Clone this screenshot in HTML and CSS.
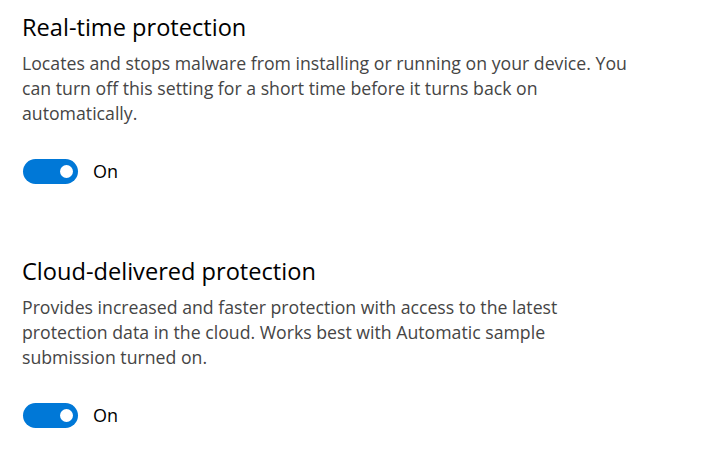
FILE: index.html
```html
<!DOCTYPE html>
<html lang="en">
<head>
<meta charset="utf-8">
<title>Virus &amp; threat protection settings</title>
<link rel="stylesheet" href="styles.css">
</head>
<body>
<main class="page">
  <section class="setting">
    <h2 class="setting-title">Real-time protection</h2>
    <p class="setting-desc">Locates and stops malware from installing or running on your device. You can turn off this setting for a short time before it turns back on automatically.</p>
    <div class="toggle-row">
      <span class="toggle"><span class="thumb"></span></span>
      <span class="toggle-label">On</span>
    </div>
  </section>
  <section class="setting">
    <h2 class="setting-title">Cloud-delivered protection</h2>
    <p class="setting-desc">Provides increased and faster protection with access to the latest protection data in the cloud. Works best with Automatic sample submission turned on.</p>
    <div class="toggle-row">
      <span class="toggle"><span class="thumb"></span></span>
      <span class="toggle-label">On</span>
    </div>
  </section>
</main>
</body>
</html>
```
FILE: styles.css
```css
html, body {
  margin: 0;
  padding: 0;
  background: #ffffff;
}
body {
  font-family: "Open Sans", "Noto Sans", sans-serif;
  width: 713px;
  height: 453px;
  overflow: hidden;
}
.page {
  padding: 10px 0 0 22px;
  width: 609px;
}
.setting {
  margin-bottom: 70px;
}
.setting:last-child {
  margin-bottom: 0;
}
.setting-title {
  margin: 0;
  font-size: 23.6px;
  font-weight: 400;
  line-height: 34px;
  color: #000;
}
.setting-desc {
  margin: 7px 0 0;
  font-size: 17.7px;
  line-height: 25px;
  color: #454545;
}
.toggle-row {
  display: flex;
  align-items: center;
  gap: 15px;
  margin-top: 32.5px;
  height: 25.5px;
}
.toggle {
  width: 55px;
  height: 25px;
  border-radius: 13px;
  background: #0078d7;
  display: flex;
  align-items: center;
  justify-content: flex-end;
  padding-right: 5px;
  box-sizing: border-box;
  margin-left: 1px;
}
.thumb {
  width: 13px;
  height: 13px;
  border-radius: 50%;
  background: #fff;
}
.toggle-label {
  font-size: 18px;
  line-height: 25px;
  color: #000;
}
```
